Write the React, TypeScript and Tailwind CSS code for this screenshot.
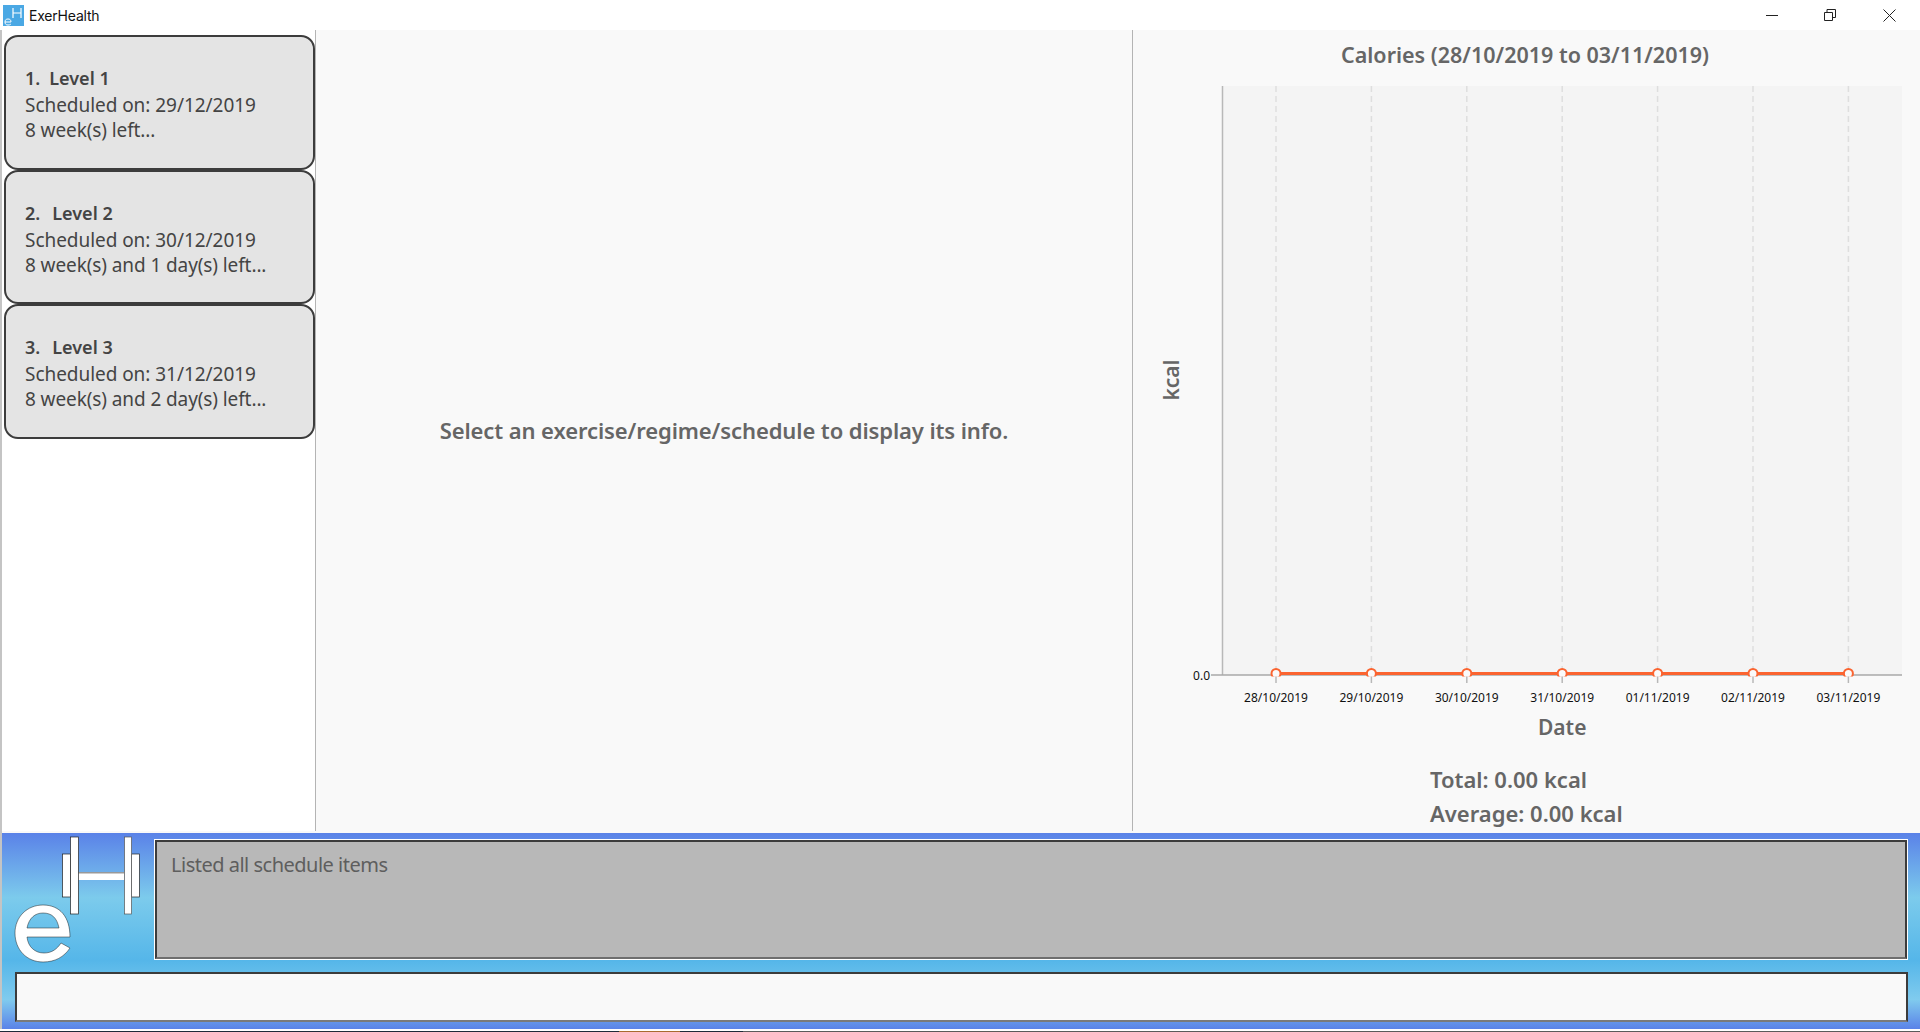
const font = "font-['Noto_Sans',sans-serif]";

const items = [
  { num: "1.", gap: "gap-[9px]", name: "Level 1", date: "29/12/2019", left: "8 week(s) left..." },
  { num: "2.", gap: "gap-[12px]", name: "Level 2", date: "30/12/2019", left: "8 week(s) and 1 day(s) left..." },
  { num: "3.", gap: "gap-[12px]", name: "Level 3", date: "31/12/2019", left: "8 week(s) and 2 day(s) left..." },
];

const dates = ["28/10/2019", "29/10/2019", "30/10/2019", "31/10/2019", "01/11/2019", "02/11/2019", "03/11/2019"];

const ScheduleCard = ({ item }: { item: (typeof items)[number] }) => (
  <div className="h-[134.5px] bg-[#e4e4e4] border-2 border-[#3c3c3c] rounded-[14px] pl-[19px] pt-[29px] text-[#444444]">
    <div className={`flex ${item.gap} text-[18px] leading-[24px] font-semibold`}>
      <span>{item.num}</span>
      <span>{item.name}</span>
    </div>
    <div className="mt-[3px] text-[19px] leading-[25px] tracking-[-0.05px]">Scheduled on: {item.date}</div>
    <div className="text-[19px] leading-[25px] tracking-[-0.1px]">{item.left}</div>
  </div>
);

const Chart = () => {
  const xs = dates.map((_, i) => 143 + i * 95.4);
  return (
    <svg width="787" height="665" viewBox="0 0 787 665" className="block">
      <defs>
        <clipPath id="plotClip">
          <rect x="0" y="0" width="787" height="590.500" />
        </clipPath>
      </defs>
      <rect x="89" y="0" width="680" height="589" fill="#f4f4f4" />
      {xs.map((x) => (
        <line key={x} x1={x} x2={x} y1="0" y2="589" stroke="#dedede" strokeWidth="1.5" strokeDasharray="6 4" />
      ))}
      <line x1="89.500" x2="89.500" y1="0" y2="589" stroke="#b8b8b8" strokeWidth="1.5" />
      <line x1="78" x2="769" y1="589" y2="589" stroke="#a8a8a8" strokeWidth="1.5" />
      {xs.map((x) => (
        <line key={x} x1={x} x2={x} y1="589" y2="597" stroke="#b8b8b8" strokeWidth="1.5" />
      ))}
      <line x1={xs[0]} x2={xs[6]} y1="587.500" y2="587.500" stroke="#fb6430" strokeWidth="3" />
      <g clipPath="url(#plotClip)">
        {xs.map((x) => (
          <circle key={x} cx={x} cy="587.500" r="4.500" fill="#fafafa" stroke="#fb6430" strokeWidth="2" />
        ))}
      </g>
      <text x="77" y="594" textAnchor="end" fontSize="12" fill="#111">0.0</text>
      {dates.map((d, i) => (
        <text key={d} x={xs[i]} y="616" textAnchor="middle" fontSize="12" fill="#111">{d}</text>
      ))}
      <text x={xs[3]} y="649" textAnchor="middle" fontSize="21" fontWeight="600" fill="#666">Date</text>
      <text transform="translate(46 294) rotate(-90)" textAnchor="middle" fontSize="21" fontWeight="600" fill="#666">kcal</text>
    </svg>
  );
};

const Logo = () => (
  <svg width="152" height="139" viewBox="0 0 152 139" className="block">
    <rect x="60.500" y="21" width="8" height="43" fill="#fff" stroke="#222" strokeWidth="0.7" />
    <rect x="129.500" y="21" width="8" height="43" fill="#fff" stroke="#222" strokeWidth="0.7" />
    <rect x="75.500" y="39" width="47" height="8" fill="#fff" />
    <rect x="75.500" y="39" width="47" height="1.500" fill="#999" />
    <rect x="68.500" y="4" width="8" height="77" fill="#fff" stroke="#222" strokeWidth="0.7" />
    <rect x="122.500" y="4" width="7" height="77" fill="#fff" stroke="#555" strokeWidth="0.7" />
    <path
      d="M13 100 C13 84 25 72 41 72 C58 72 68 84 68 104 L25 104 C26 114 33 120 42 120 C50 120 55 116 59 110 L68 115 C62 124 53 129 41 129 C25 129 13 117 13 100 Z M25 95 L57 95 C55 85 50 80 41 80 C33 80 27 85 25 95 Z"
      fill="#fff"
      fillRule="evenodd"
      stroke="#222"
      strokeWidth="0.5"
    />
  </svg>
);

export default function App() {
  return (
    <div className={`w-[1920px] h-[1032px] overflow-hidden flex flex-col bg-white ${font}`}>
      <div className="h-[30px] shrink-0 flex items-center bg-white">
        <svg width="21" height="21" viewBox="0 0 21 21" className="ml-[3px]">
          <rect width="21" height="21" fill="#4aa8e4" />
          <path d="M10 3v10M18 3v10M10 8h8" stroke="#fff" strokeWidth="1.2" fill="none" />
          <path d="M2 17h6M8 17c0-2-1-3-3-3s-3 1-3 3 1 3 3 3 2-.5 3-1" stroke="#fff" strokeWidth="1" fill="none" />
        </svg>
        <span className="ml-[5px] text-[14px] tracking-[-0.2px] text-[#111] font-['Inter',sans-serif]">ExerHealth</span>
        <div className="ml-auto flex items-center">
          <svg width="12" height="12" viewBox="0 0 12 12" className="mr-[46px]">
            <path d="M0 6.5h12" stroke="#222" strokeWidth="1" />
          </svg>
          <svg width="12" height="12" viewBox="0 0 12 12" className="mr-[47px]">
            <path d="M.5 3.5h8v8h-8zM3 3.5V.5h8.500v8H8.500" stroke="#222" strokeWidth="1" fill="none" />
          </svg>
          <svg width="13" height="13" viewBox="0 0 13 13" className="mr-[24px]">
            <path d="M.5.5l12 12M12.500.5l-12 12" stroke="#222" strokeWidth="1" />
          </svg>
        </div>
      </div>

      <div className="h-[803px] shrink-0 flex border-l-2 border-[#c4c4c4] bg-[#f9f9f9]">
        <div className="w-[314px] h-[801px] shrink-0 border-r border-[#b4b4b4] bg-white pl-[2px] pt-[5px] flex flex-col">
          {items.map((item) => (
            <ScheduleCard key={item.num} item={item} />
          ))}
        </div>
        <div className="w-[817px] h-[801px] shrink-0 border-r border-[#b4b4b4] bg-[#f9f9f9] flex items-center justify-center">
          <p className="text-[22px] font-semibold text-[#666] tracking-[-0.1px]">
            Select an exercise/regime/schedule to display its info.
          </p>
        </div>
        <div className="flex-1 flex flex-col">
          <h2 className="h-[56px] pt-[10px] text-center text-[21.5px] leading-[30px] font-semibold text-[#666] -ml-[3px]">
            Calories (28/10/2019 to 03/11/2019)
          </h2>
          <Chart />
          <div className="ml-[297px] mt-[11px] text-[22px] leading-[34px] font-semibold text-[#666]">
            <div>Total: 0.00 kcal</div>
            <div>Average: 0.00 kcal</div>
          </div>
        </div>
      </div>

      <div className="h-[196px] shrink-0 flex flex-col border-l-2 border-[#c4c4c4] bg-[linear-gradient(to_bottom,#5a82e8_0%,#7ccbec_33%,#55b6e9_65%,#80cbee_85%,#5a82e8_100%)]">
        <div className="flex h-[139px] shrink-0 pt-[7px]">
          <div className="w-[152px] -mt-[7px] shrink-0">
            <Logo />
          </div>
          <div className="flex-1 ml-[1px] mr-[13px] h-[119px] bg-[#b8b8b8] border-2 border-[#3c3c3c] border-b-[#6e6e6e] outline outline-1 outline-white px-[14px] py-[9px]">
            <span className="block text-[20px] leading-[28px] text-[#5e5e5e] tracking-[-0.5px]">Listed all schedule items</span>
          </div>
        </div>
        <div className="ml-[13px] mr-[12px] h-[50px] bg-[#f9f9f9] border-2 border-[#3c3c3c] border-b-[#7a7a7a]" />
      </div>

      <div className="h-[2px] shrink-0 bg-white" />
      <div className="h-[1px] shrink-0 flex bg-[#5a5a5a]">
        <div className="w-[619px] bg-[#1f2a38]" />
        <div className="w-[61px] bg-[#a86a30]" />
        <div className="w-[63px] bg-[#1f2a38]" />
      </div>
    </div>
  );
}
